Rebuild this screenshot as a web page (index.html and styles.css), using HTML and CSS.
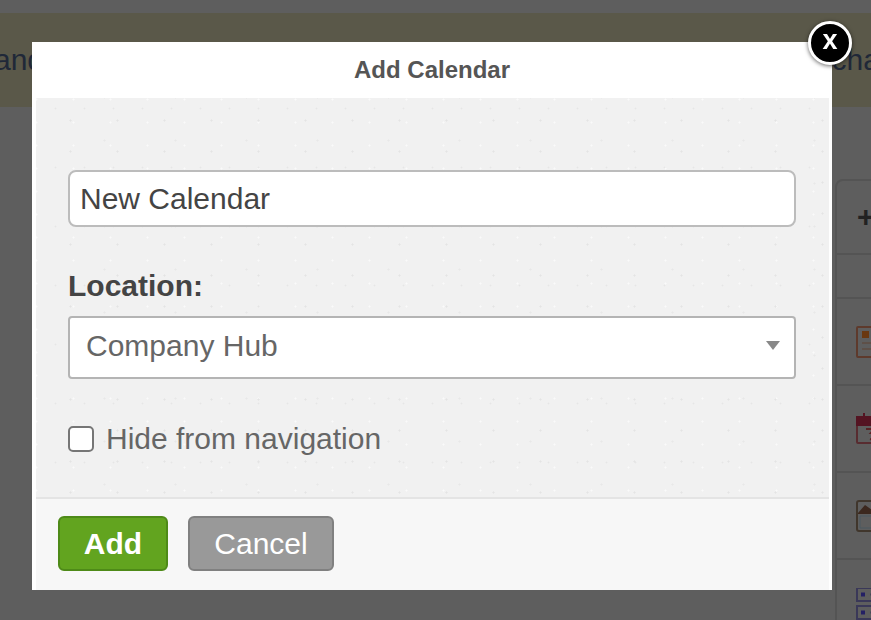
FILE: index.html
```html
<!DOCTYPE html>
<html lang="en">
<head>
  <meta charset="UTF-8" />
  <title>Add Calendar</title>
  <link rel="stylesheet" href="styles.css">
</head>
<body>
  <div class="page">
    <div class="banner">
      <span class="banner-left">and</span>
      <span class="banner-right">change</span>
    </div>

    <!-- Sidebar behind the dialog -->
    <div class="sidebar">
      <div class="side-row side-add">+</div>
      <div class="side-row side-blank"></div>
      <div class="side-row">
        <svg class="side-icon" viewBox="0 0 32 32" fill="none" stroke="#5e3a2c" stroke-width="2">
          <rect x="1" y="1" width="30" height="30" rx="1"/>
          <rect x="6" y="5" width="7" height="7" fill="#6a3810" stroke="none"/>
          <path d="M6 17h22M6 23h22" stroke="#5e5048" stroke-width="2"/>
        </svg>
      </div>
      <div class="side-row">
        <svg class="side-icon" viewBox="0 0 32 32" fill="none" stroke="#582c30" stroke-width="2">
          <rect x="1" y="5" width="30" height="25" rx="1"/>
          <rect x="1" y="4" width="30" height="8" fill="#541422" stroke="#541422"/>
          <path d="M8 0v5M24 0v5" stroke="#541422"/>
          <path d="M10 16h9l-4 4c4 0 5 2 5 3.500 0 2-2 3.500-6 2.500" stroke="#582224"/>
        </svg>
      </div>
      <div class="side-row">
        <svg class="side-icon" viewBox="0 0 32 32" fill="none" stroke="#40362c" stroke-width="2">
          <rect x="1" y="1" width="30" height="30" rx="2"/>
          <path d="M2 13l7-8 7 5 14 1v3H2z" fill="#3c281e" stroke="none"/>
          <path d="M4 16h24v12H4z" stroke="#4a5860" stroke-width="1"/>
        </svg>
      </div>
      <div class="side-row side-list">
        <svg class="side-icon" viewBox="0 0 32 32" fill="none" stroke="#3a3858" stroke-width="2">
          <rect x="1" y="0" width="30" height="13"/>
          <rect x="1" y="18" width="30" height="13"/>
          <path d="M5 6.500h4M5 24.500h4" stroke="#242064" stroke-width="4"/>
          <path d="M14 6.500h14M14 24.500h14" stroke="#464658"/>
        </svg>
      </div>
    </div>

    <div class="dialog">
      <div class="dialog-title">Add Calendar</div>
      <div class="dialog-body">
        <input class="text-input" type="text" value="New Calendar">
        <label class="field-label">Location:</label>
        <div class="select-box">
          <span>Company Hub</span>
          <span class="select-arrow"></span>
        </div>
        <label class="check-row">
          <input type="checkbox">
          <span>Hide from navigation</span>
        </label>
      </div>
      <div class="dialog-footer">
        <button class="btn btn-add">Add</button>
        <button class="btn btn-cancel">Cancel</button>
      </div>
      <div class="close-btn">x</div>
    </div>
  </div>
</body>
</html>
```

FILE: styles.css
```css
html, body {
  margin: 0;
  padding: 0;
}
body {
  font-family: "Liberation Sans", Arial, sans-serif;
  background: #5e5e5e;
}
.page {
  position: relative;
  width: 871px;
  height: 620px;
  overflow: hidden;
  background: #5e5e5e;
}
.banner {
  height: 94px;
  position: absolute;
  top: 13px;
  left: 0;
  right: 0;
  display: flex;
  justify-content: space-between;
  align-items: center;
  background: #5a5849;
  color: #202838;
  font-size: 30px;
  white-space: nowrap;
  overflow: hidden;
}
.banner-left {
  margin-left: -6px;
}
.banner-right {
  margin-right: -59px;
}
.sidebar {
  position: absolute;
  top: 179px;
  left: 835px;
  width: 60px;
  border: 2px solid #545454;
  border-radius: 8px 0 0 0;
}
.side-row {
  height: 85px;
  border-bottom: 2px solid #545454;
  padding-left: 19px;
  display: flex;
  align-items: center;
}
.side-add {
  height: 72px;
  font-size: 30px;
  font-weight: bold;
  color: #222;
  padding-left: 20px;
}
.side-blank {
  height: 42px;
}
.side-list {
  align-items: flex-start;
  padding-top: 28px;
  height: 57px;
}
.side-icon {
  width: 32px;
  height: 32px;
  flex: none;
}
.dialog {
  position: absolute;
  left: 32px;
  top: 42px;
  width: 800px;
  height: 548px;
  display: flex;
  flex-direction: column;
  background: #fff;
  filter: blur(0.5px);
}
.dialog-title {
  height: 56px;
  line-height: 56px;
  text-align: center;
  font-size: 24px;
  font-weight: bold;
  color: #555;
}
.dialog-body {
  flex: 1;
  margin: 0 3px 0 4px;
  padding: 72px 33px 0 32px;
  background-color: #f1f1f1;
  background-image:
    radial-gradient(circle, #e4e4e4 0.8px, transparent 1.3px),
    radial-gradient(circle, #e8e8e8 0.8px, transparent 1.3px),
    radial-gradient(circle, #e6e6e6 0.7px, transparent 1.2px),
    radial-gradient(circle, #fafafa 0.8px, transparent 1.3px);
  background-size: 47px 31px, 71px 43px, 29px 59px, 37px 23px;
  background-position: 11px 7px, 33px 21px, 5px 40px, 19px 13px;
  border-bottom: 2px solid #e4e4e4;
}
.text-input {
  display: block;
  box-sizing: border-box;
  width: 728px;
  height: 57px;
  padding: 0 10px;
  font-family: inherit;
  font-size: 30px;
  color: #444;
  background: #fff;
  border: 2px solid #bcbcbc;
  border-radius: 8px;
  outline: none;
}
.field-label {
  display: block;
  margin-top: 41px;
  font-size: 30px;
  line-height: 36px;
  font-weight: bold;
  color: #444;
}
.select-box {
  box-sizing: border-box;
  width: 728px;
  height: 63px;
  margin-top: 12px;
  padding: 0 14px 4px 16px;
  display: flex;
  justify-content: space-between;
  align-items: center;
  font-size: 30px;
  color: #666;
  background: #fff;
  border: 2px solid #b4b4b4;
  border-radius: 4px;
}
.select-arrow {
  width: 0;
  height: 0;
  border-left: 7px solid transparent;
  border-right: 7px solid transparent;
  border-top: 9px solid #888;
}
.check-row {
  display: flex;
  align-items: center;
  gap: 12px;
  margin-top: 43px;
  font-size: 30px;
  color: #666;
}
.check-row input {
  appearance: none;
  box-sizing: border-box;
  width: 26px;
  height: 26px;
  margin: 0;
  background: #fff;
  border: 2px solid #767676;
  border-radius: 5px;
}
.dialog-footer {
  height: 91px;
  margin: 0 3px 0 4px;
  padding: 17px 0 0 22px;
  display: flex;
  align-items: flex-start;
  gap: 20px;
  box-sizing: border-box;
  background: #f7f7f7;
}
.btn {
  height: 55px;
  padding: 0;
  font-family: inherit;
  font-size: 30px;
  color: #fff;
  border-radius: 6px;
  cursor: pointer;
}
.btn-add {
  width: 110px;
  font-weight: bold;
  background: #62a41f;
  border: 2px solid #4e8a18;
}
.btn-cancel {
  width: 146px;
  background: #999;
  border: 2px solid #808080;
}
.close-btn {
  position: absolute;
  left: 776px;
  top: -21px;
  box-sizing: border-box;
  width: 44px;
  height: 44px;
  line-height: 33px;
  text-align: center;
  font-size: 27px;
  font-weight: bold;
  color: #fff;
  background: #000;
  border: 3px solid #fff;
  border-radius: 50%;
  box-shadow: 0 1px 4px rgba(0, 0, 0, 0.6);
}
```
